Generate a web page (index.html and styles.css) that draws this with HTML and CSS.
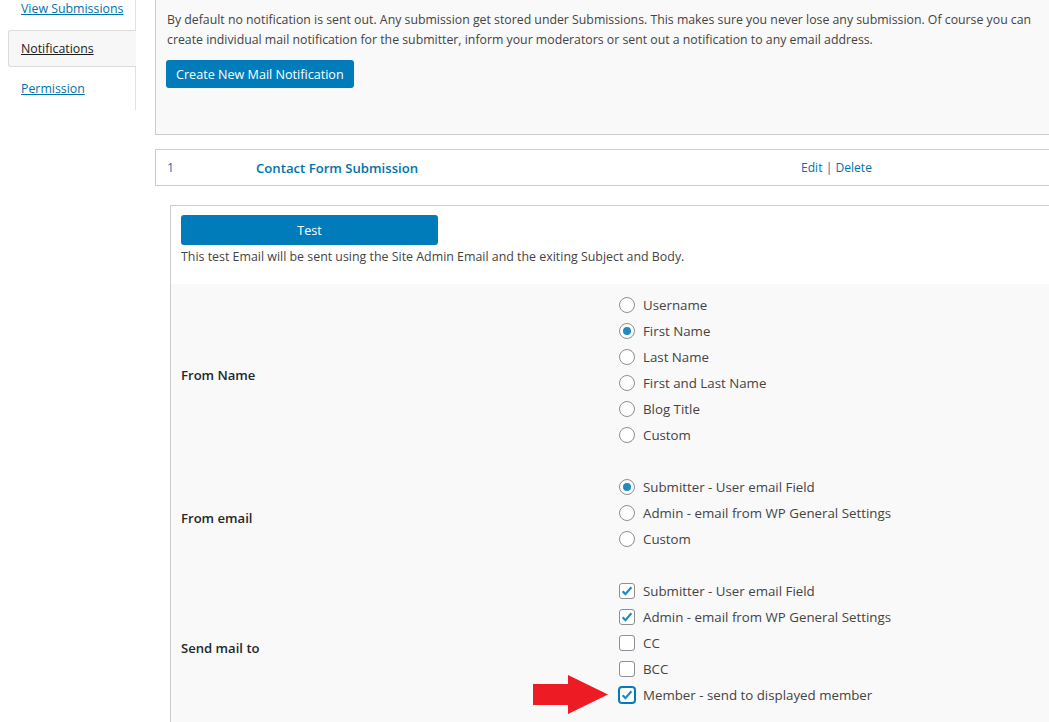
FILE: index.html
```html
<!DOCTYPE html>
<html lang="en">
<head>
<meta charset="utf-8">
<title>Notifications</title>
<link rel="stylesheet" href="styles.css">
</head>
<body>
<div class="layout">
  <aside class="sidebar">
    <ul class="tabs">
      <li class="tab"><a href="#">View Submissions</a></li>
      <li class="tab active"><a href="#">Notifications</a></li>
      <li class="tab"><a href="#">Permission</a></li>
    </ul>
  </aside>
  <main class="main">
    <section class="intro">
      <p class="intro-text">By default no notification is sent out. Any submission get stored under Submissions. This makes sure you never lose any submission. Of course you can create individual mail notification for the submitter, inform your moderators or sent out a notification to any email address.</p>
      <button class="btn-primary" type="button">Create New Mail Notification</button>
    </section>

    <div class="submission">
      <span class="sub-num">1</span>
      <a class="sub-title" href="#">Contact Form Submission</a>
      <span class="sub-actions"><a href="#">Edit</a> | <a href="#">Delete</a></span>
    </div>

    <section class="editor">
      <div class="test-area">
        <button class="btn-test" type="button">Test</button>
        <p class="test-note">This test Email will be sent using the Site Admin Email and the exiting Subject and Body.</p>
      </div>
      <div class="form-table">
        <div class="th">From Name</div>
        <div class="td">
          <ul class="options">
            <li><span class="radio"></span>Username</li>
            <li><span class="radio checked"></span>First Name</li>
            <li><span class="radio"></span>Last Name</li>
            <li><span class="radio"></span>First and Last Name</li>
            <li><span class="radio"></span>Blog Title</li>
            <li><span class="radio"></span>Custom</li>
          </ul>
        </div>

        <div class="th">From email</div>
        <div class="td">
          <ul class="options">
            <li><span class="radio checked"></span>Submitter - User email Field</li>
            <li><span class="radio"></span>Admin - email from WP General Settings</li>
            <li><span class="radio"></span>Custom</li>
          </ul>
        </div>

        <div class="th">Send mail to</div>
        <div class="td">
          <ul class="options">
            <li><span class="checkbox"><svg viewBox="0 0 14 14" width="14" height="14"><path d="M2.6 7.2 L5.4 10.2 L11.4 3.2" /></svg></span>Submitter - User email Field</li>
            <li><span class="checkbox"><svg viewBox="0 0 14 14" width="14" height="14"><path d="M2.6 7.2 L5.4 10.2 L11.4 3.2" /></svg></span>Admin - email from WP General Settings</li>
            <li><span class="checkbox"></span>CC</li>
            <li><span class="checkbox"></span>BCC</li>
            <li class="has-arrow">
              <svg class="arrow" viewBox="0 0 76 40" width="76" height="40"><polygon points="0,9 35,9 35,0 75,19.5 35,39 35,30 0,30" /></svg>
              <span class="checkbox focused"><svg viewBox="0 0 14 14" width="14" height="14"><path d="M2.6 7.2 L5.4 10.2 L11.4 3.2" /></svg></span>Member - send to displayed member</li>
          </ul>
        </div>
      </div>
    </section>
  </main>
</div>
</body>
</html>
```

FILE: styles.css
```css
body {
  margin: 0;
  background: #fff;
  color: #444;
  font-family: "Open Sans", "Noto Sans", sans-serif;
  font-size: 12.4px;
  overflow: hidden;
}

a {
  color: #0073aa;
}

.layout {
  display: grid;
  grid-template-columns: 155px 1fr;
  margin-top: -10px;
}

/* Sidebar tabs */
.sidebar {
  align-self: start;
}

.tabs {
  list-style: none;
  margin: 0 0 0 8px;
  padding: 0 0 3px;
  width: 127px;
  border-right: 1px solid #e1e1e1;
}

.tab {
  height: 37px;
  box-sizing: border-box;
  display: flex;
  align-items: center;
  padding-left: 13px;
  margin-bottom: 3px;
  font-size: 12.35px;
}

.tab:last-child {
  margin-bottom: 0;
}

.tab a {
  color: #0073aa;
  text-decoration: underline;
}

.tab.active {
  border: 1px solid #dcdcde;
  border-right: none;
  border-radius: 3px 0 0 3px;
  background: #f7f7f7;
  padding-left: 12px;
  margin-right: -1px;
}

.tab.active a {
  color: #1d1d1d;
}

/* Main column */
.main {
  margin-right: -30px;
  min-width: 0;
}

.intro {
  background: #f9f9f9;
  border: 1px solid #ccc;
  padding: 19px 10px 46px 11px;
}

.intro-text {
  margin: 0;
  line-height: 20px;
  font-size: 12.3px;
  max-width: 872px;
}

.btn-primary {
  display: block;
  margin: 10px 0 0 -1px;
  height: 28px;
  padding: 0 10px;
  background: #007cba;
  color: #fff;
  border: none;
  border-radius: 3px;
  font: inherit;
  font-size: 12.6px;
  cursor: pointer;
}

.submission {
  margin-top: 14px;
  height: 37px;
  box-sizing: border-box;
  border: 1px solid #ccc;
  background: #fff;
  display: grid;
  grid-template-columns: 89px 545px auto;
  align-items: center;
  padding-left: 11px;
}

.sub-num {
  color: #0073aa;
  font-size: 12.4px;
}

.sub-title {
  color: #0073aa;
  font-weight: 600;
  font-size: 13.15px;
  text-decoration: none;
}

.sub-actions {
  color: #0073aa;
  font-size: 12.1px;
}

.sub-actions a {
  text-decoration: none;
}

/* Editor */
.editor {
  margin: 19px 0 0 15px;
  border: 1px solid #ccc;
  background: #fff;
}

.test-area {
  padding: 9px 10px 18px;
}

.btn-test {
  display: block;
  width: 257px;
  height: 30px;
  background: #007cba;
  color: #fff;
  border: none;
  border-radius: 3px;
  font: inherit;
  font-size: 12.6px;
  cursor: pointer;
}

.test-note {
  margin: 3px 0 0;
  line-height: 18px;
  font-size: 12.4px;
}

.form-table {
  background: #f9f9f9;
  display: grid;
  grid-template-columns: 448px 1fr;
  align-items: center;
}

.th {
  padding-left: 10px;
  font-weight: 600;
  font-size: 13.1px;
  color: #23282d;
}

.td {
  padding: 8px 0;
}

.options {
  list-style: none;
  margin: 0;
  padding: 0 0 10px;
  font-size: 13.3px;
}

.options li {
  height: 26px;
  display: flex;
  align-items: center;
  gap: 8px;
}

.radio {
  width: 16px;
  height: 16px;
  box-sizing: border-box;
  border: 1px solid #8c8f94;
  border-radius: 50%;
  background: #fff;
  display: flex;
  align-items: center;
  justify-content: center;
  flex: none;
}

.radio.checked::before {
  content: "";
  width: 8px;
  height: 8px;
  border-radius: 50%;
  background: #1e8cbe;
}

.checkbox {
  width: 16px;
  height: 16px;
  box-sizing: border-box;
  border: 1px solid #8c8f94;
  border-radius: 3px;
  background: #fff;
  display: flex;
  align-items: center;
  justify-content: center;
  flex: none;
}

.checkbox svg path {
  fill: none;
  stroke: #1e8cbe;
  stroke-width: 2.2;
}

.checkbox.focused {
  border-color: #007cba;
  box-shadow: 0 0 0 1px #007cba;
}

.has-arrow {
  position: relative;
}

.arrow {
  position: absolute;
  left: -86px;
  top: -7px;
}

.arrow polygon {
  fill: #ed1c24;
}
```
